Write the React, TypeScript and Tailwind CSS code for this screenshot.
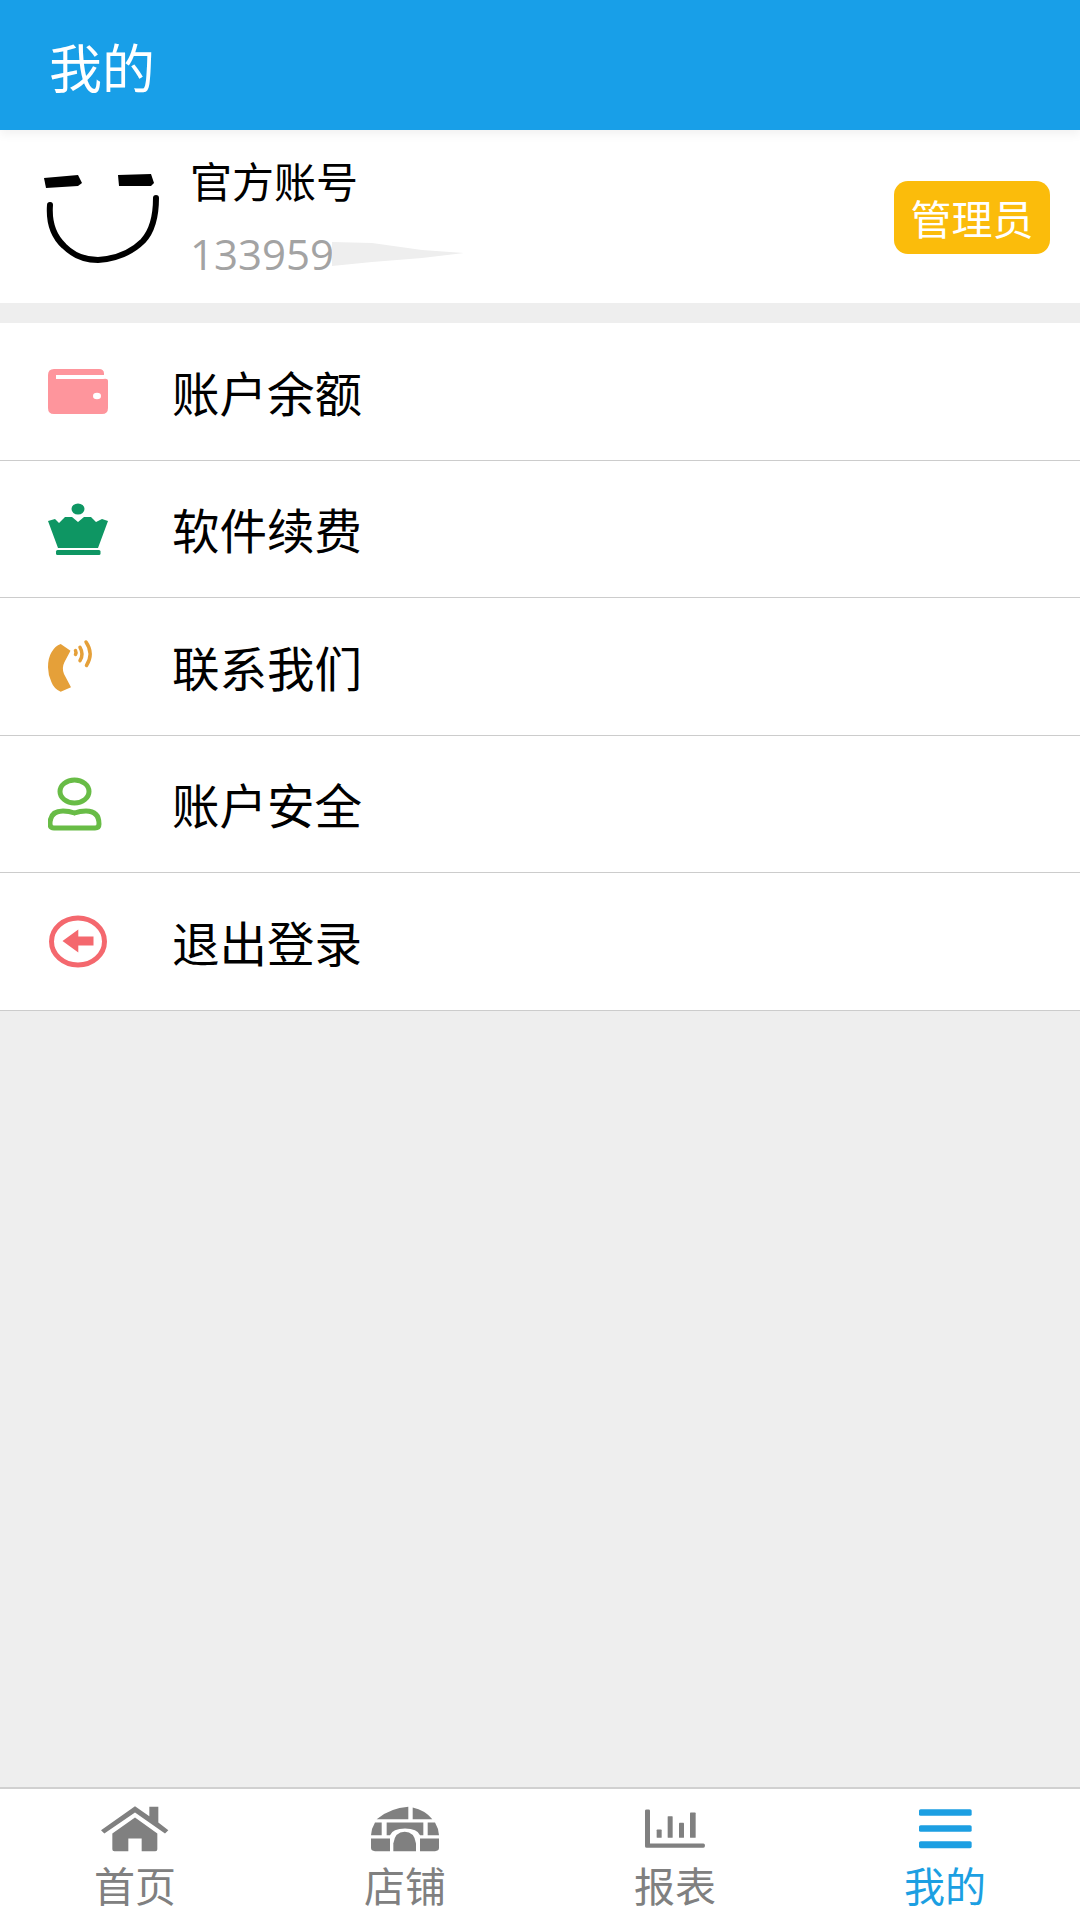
const cjk = "font-['Noto_Sans_CJK_SC','Noto_Sans',sans-serif]";

const WalletIcon = () => (
  <svg width="60" height="60" viewBox="0 0 60 60">
    <path d="M6 8H51Q56 8 56 12.500V14H60V47Q60 53 54 53H6Q0 53 0 47V14Q0 8 6 8Z" fill="#fe959c" />
    <rect x="8" y="14" width="47" height="4" fill="#ffffff" />
    <path d="M55 14H60V20Q60 17 55 18Z" fill="#ffffff" />
    <ellipse cx="49" cy="35" rx="4" ry="3.200" fill="#ffffff" />
  </svg>
);

const CrownIcon = () => (
  <svg width="60" height="60" viewBox="0 0 60 60">
    <ellipse cx="30" cy="10" rx="6.500" ry="5.500" fill="#0e9663" />
    <path d="M0 22L7 20L11 24L17 18H24L30 23L36 18H43L48 23L54 20L60 22L50 49H10Z" fill="#0e9663" />
    <rect x="8" y="51" width="44.500" height="5" rx="1.500" fill="#0e9663" />
  </svg>
);

const PhoneIcon = () => (
  <svg width="60" height="60" viewBox="0 0 60 60">
    <path
      d="M12.700 8L22.500 14.700L16.500 26Q13.500 32 16 38L23 51.300L12.700 55.700Q6 53 3.500 46.300Q0 39 0 31.300Q0 22 3.500 16.300Q7 10 12.700 8Z"
      fill="#e5a039"
    />
    <g fill="none" stroke="#e5a039" strokeWidth="3.500" strokeLinecap="round">
      <path d="M27.500 14.500Q28.500 16.500 27.500 18.500" />
      <path d="M32 11.300Q36 18 32 24.700" />
      <path d="M38 6Q46 17.500 38.500 29.500" />
    </g>
  </svg>
);

const PersonIcon = () => (
  <svg width="60" height="60" viewBox="0 0 60 60" fill="none" stroke="#68bc46" strokeWidth="5">
    <ellipse cx="26.500" cy="17.500" rx="14.500" ry="11.500" />
    <path d="M6 54H47Q51 54 51 50Q51 37 38 37Q32 37 26.500 39Q21 37 15 37Q2 37 2 50Q2 54 6 54Z" />
  </svg>
);

const ExitIcon = () => (
  <svg width="60" height="60" viewBox="0 0 60 60">
    <ellipse cx="30" cy="30.500" rx="26.500" ry="23.500" fill="none" stroke="#f4686e" strokeWidth="5" />
    <path d="M14.500 30L30.300 18.500V25.500H45.500V34.500H30.300V41.500Z" fill="#f4686e" />
  </svg>
);

const menu = [
  { label: "账户余额", icon: <WalletIcon /> },
  { label: "软件续费", icon: <CrownIcon /> },
  { label: "联系我们", icon: <PhoneIcon /> },
  { label: "账户安全", icon: <PersonIcon /> },
  { label: "退出登录", icon: <ExitIcon /> },
];

const HomeIcon = () => (
  <svg width="70" height="47" viewBox="120 75 210 140" fill="#808080">
    <path d="M123 150L225 78L268 108V80H295V127L325 150L315 160L225 97L133 160Z" />
    <path d="M157 160L225 112L292 160V207Q292 213 286 213H245V175H205V213H163Q157 213 157 207Z" />
  </svg>
);

const IglooIcon = () => (
  <svg width="70" height="47" viewBox="930 75 210 140" fill="#808080">
    <path d="M950 117Q990 84 1045 80V117Z" />
    <path d="M1058 82Q1095 90 1117 117H1058Z" />
    <path d="M933 165Q934 145 945 127H965V165Z" />
    <path d="M980 127H1090V165H1080Q1072 145 1035 145Q998 145 990 165H980Z" />
    <path d="M1103 127H1125Q1136 145 1137 165H1103Z" />
    <path d="M933 175H990V213H945Q933 213 933 203Z" />
    <path d="M1000 213V190Q1005 155 1034 155Q1063 155 1068 190V213Z" />
    <path d="M1080 175H1137V203Q1137 213 1125 213H1080Z" />
  </svg>
);

const ChartIcon = () => (
  <svg width="70" height="47" viewBox="120 75 210 140" fill="#808080">
    <path d="M140 88H146Q150 88 150 92V190H310Q315 190 315 196Q315 203 310 203H140Q135 203 135 198V92Q135 88 140 88Z" />
    <rect x="170" y="148" width="15" height="25" rx="2" />
    <rect x="203" y="108" width="15" height="65" rx="2" />
    <rect x="237" y="128" width="15" height="45" rx="2" />
    <rect x="270" y="97" width="17" height="76" rx="2" />
  </svg>
);

const MenuIcon = () => (
  <svg width="70" height="47" viewBox="930 75 210 140" fill="#1c9fe2">
    <rect x="957" y="87" width="158" height="20" rx="5" />
    <rect x="957" y="135" width="158" height="20" rx="5" />
    <rect x="957" y="183" width="158" height="21" rx="5" />
  </svg>
);

const tabs = [
  { label: "首页", icon: <HomeIcon />, active: false },
  { label: "店铺", icon: <IglooIcon />, active: false },
  { label: "报表", icon: <ChartIcon />, active: false },
  { label: "我的", icon: <MenuIcon />, active: true },
];

export default function App() {
  return (
    <div className={`flex h-[1920px] w-[1080px] flex-col overflow-hidden bg-[#eeeeee] ${cjk}`}>
      <header className="relative z-10 flex h-[130px] items-center bg-[#189fe8] pl-[49px] pt-[3px] text-[53px] text-white shadow-[0_4px_10px_rgba(0,0,0,0.06)]">
        我的
      </header>

      <section className="flex h-[173px] items-center bg-white">
        <svg className="ml-[40px] shrink-0" width="120" height="96" viewBox="40 172 120 96">
          <path d="M44 181L78 178L82 186L78 189L46 191Z" fill="#000000" />
          <path d="M118 178L151 177L154 186L151 189L119 189Z" fill="#000000" />
          <path
            d="M50 208Q48 234 64 249Q78 263 98 263Q126 261 143 244Q156 230 156 201"
            fill="none"
            stroke="#000000"
            strokeWidth="6"
            strokeLinecap="round"
          />
        </svg>
        <div className="ml-[30px] flex flex-col">
          <div className="text-[42px] leading-[50px] text-black">官方账号</div>
          <div className="mt-[24px] flex items-center font-['Open_Sans','Noto_Sans',sans-serif] text-[42px] leading-[50px] text-[#a3a3a3]">
            133959
            <svg className="ml-[-2px]" width="132" height="26" viewBox="0 0 132 26">
              <path d="M0 1L40 2L90 9L132 12L90 17L40 21L0 25Z" fill="#eeeeee" />
            </svg>
          </div>
        </div>
        <div className="ml-auto mr-[30px] mt-[2px] flex h-[73px] w-[156px] items-center justify-center rounded-[14px] bg-[#fbbc0b] text-[41px] text-white">
          管理员
        </div>
      </section>

      <ul className="mt-[20px] bg-white">
        {menu.map((item) => (
          <li
            key={item.label}
            className="flex h-[137.500px] items-center border-b border-[#cccccc] pl-[48px]"
          >
            <span className="w-[124px] shrink-0">{item.icon}</span>
            <span className="text-[47.500px] text-black">{item.label}</span>
          </li>
        ))}
      </ul>

      <div className="flex-1" />

      <nav className="grid h-[133px] grid-cols-4 border-t-2 border-[#d0d0d0] bg-white">
        {tabs.map((tab) => (
          <div key={tab.label} className="flex flex-col items-center pt-[16px]">
            {tab.icon}
            <span
              className={`mt-[4px] text-[41px] leading-[56px] ${tab.active ? "text-[#1c9fe2]" : "text-[#808080]"}`}
            >
              {tab.label}
            </span>
          </div>
        ))}
      </nav>
    </div>
  );
}
